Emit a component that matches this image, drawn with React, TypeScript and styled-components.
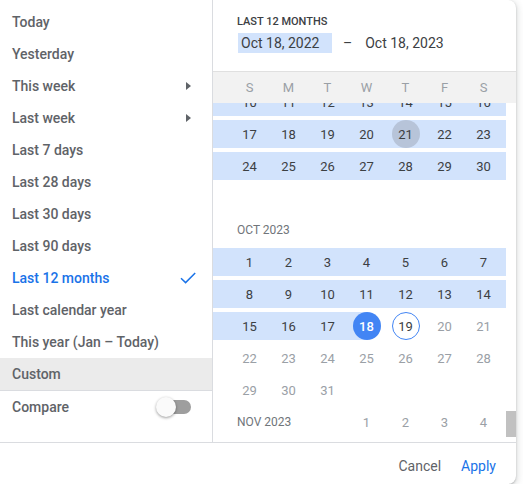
import React, { useCallback, useLayoutEffect, useRef, useState } from "react";
import styled, { createGlobalStyle } from "styled-components";

const GlobalStyle = createGlobalStyle`
  html, body { margin: 0; padding: 0; background: #fff; }
  body { font-family: Roboto, "Noto Sans", Arial, sans-serif; }
  *, *::before, *::after { box-sizing: border-box; }
`;

const ROW_H = 32;
const MONTH_ROWS = 6;
const RANGE_START = 20221018;
const RANGE_END = 20231018;
const TODAY = 20231019;
const HOVERED = 20230921;
const LAST_RENDERED = 20231118;
const FIRST_MONTH = { y: 2022, m: 0 };
const LAST_MONTH = { y: 2023, m: 10 };
const SCROLL_MONTH = { y: 2023, m: 8 };
const SCROLL_INTO = 81;

const MONTHS = ["JAN", "FEB", "MAR", "APR", "MAY", "JUN", "JUL", "AUG", "SEP", "OCT", "NOV", "DEC"];

type Cell = { day: number; key: number };
type Week = { label?: string; cells: (Cell | null)[] };
type Month = { id: string; weeks: Week[] };

function buildMonth(y: number, m: number, pad: boolean): Month {
  const first = new Date(y, m, 1).getDay();
  const dim = new Date(y, m + 1, 0).getDate();
  const label = `${MONTHS[m]} ${y}`;
  const weeks: Week[] = [];
  const separate = first < 3;
  if (separate) weeks.push({ label, cells: Array(7).fill(null) });
  let row: (Cell | null)[] = Array(7).fill(null);
  for (let d = 1; d <= dim; d++) {
    const key = y * 10000 + (m + 1) * 100 + d;
    if (key > LAST_RENDERED) break;
    const dow = (first + d - 1) % 7;
    row[dow] = { day: d, key };
    if (dow === 6 || d === dim || key === LAST_RENDERED) {
      weeks.push({ label: !separate && weeks.length === 0 ? label : undefined, cells: row });
      row = Array(7).fill(null);
    }
  }
  if (pad) while (weeks.length < MONTH_ROWS) weeks.push({ cells: Array(7).fill(null) });
  return { id: label, weeks };
}

function buildMonths(): Month[] {
  const list: Month[] = [];
  let { y, m } = FIRST_MONTH;
  while (y < LAST_MONTH.y || (y === LAST_MONTH.y && m <= LAST_MONTH.m)) {
    const isLast = y === LAST_MONTH.y && m === LAST_MONTH.m;
    list.push(buildMonth(y, m, !isLast));
    m++;
    if (m > 11) { m = 0; y++; }
  }
  return list;
}

const inRange = (k: number) => k >= RANGE_START && k <= RANGE_END;

/* ---------- layout ---------- */

const Card = styled.div`
  width: 516px;
  height: 484px;
  display: grid;
  grid-template-columns: 213px 1fr;
  grid-template-rows: 442px 1fr;
  background: #fff;
  border-radius: 0 8px 8px 0;
  box-shadow: 0 1px 2px rgba(60, 64, 67, 0.3), 0 2px 6px 2px rgba(60, 64, 67, 0.15);
  overflow: hidden;
`;

/* ---------- presets ---------- */

const Presets = styled.div`
  border-right: 1px solid #dadce0;
  display: flex;
  flex-direction: column;
  padding-top: 6px;
`;

const Preset = styled.div<{ $active?: boolean; $custom?: boolean }>`
  height: ${(p) => (p.$custom ? "33px" : "32px")};
  flex: none;
  display: flex;
  align-items: center;
  justify-content: space-between;
  padding: 0 16px 0 12px;
  font-size: 14px;
  font-weight: 500;
  color: ${(p) => (p.$active ? "#1a73e8" : "#5f6368")};
  background: ${(p) => (p.$custom ? "#ebebeb" : "transparent")};
  border-bottom: ${(p) => (p.$custom ? "1px solid #dadce0" : "none")};
`;

const PresetIcon = styled.span`
  width: 16px;
  display: flex;
  align-items: center;
  justify-content: center;
`;

const Toggle = styled.span`
  position: relative;
  width: 34px;
  height: 14px;
  margin-right: 5px;
  border-radius: 7px;
  background: #9e9e9e;
`;

const ToggleThumb = styled.span`
  position: absolute;
  left: -1px;
  top: -3px;
  width: 20px;
  height: 20px;
  border-radius: 50%;
  background: #fafafa;
  box-shadow: 0 1px 3px rgba(0, 0, 0, 0.4);
`;

/* ---------- calendar ---------- */

const CalendarPanel = styled.div`
  display: flex;
  flex-direction: column;
  min-height: 0;
`;

const RangeHeader = styled.div`
  height: 72px;
  flex: none;
  padding: 14px 24px 0 24px;
  border-bottom: 1px solid #e0e0e0;
`;

const RangeTitle = styled.div`
  font-size: 11px;
  line-height: 16px;
  font-weight: 500;
  color: #3c4043;
  margin-bottom: 3px;
`;

const RangeDates = styled.div`
  display: flex;
  align-items: center;
  height: 20px;
  font-size: 14px;
  color: #3c4043;
`;

const DateChip = styled.span<{ $focused?: boolean }>`
  display: flex;
  align-items: center;
  height: 20px;
  padding: 0 3px;
  margin-left: ${(p) => (p.$focused ? "1px" : "0")};
  width: ${(p) => (p.$focused ? "94px" : "auto")};
  background: ${(p) => (p.$focused ? "#d2e3fc" : "transparent")};
`;

const Dash = styled.span`
  margin: 0 10px 0 11px;
`;

const Weekdays = styled.div`
  height: 31px;
  flex: none;
  display: grid;
  grid-template-columns: 17px repeat(7, 39px) 1fr;
  align-items: center;
  background: #f2f2f2;
  font-size: 13px;
  color: #9aa0a6;
`;

const Weekday = styled.span<{ $col: number }>`
  grid-column: ${(p) => p.$col + 2};
  text-align: center;
`;

const ScrollArea = styled.div`
  flex: 1;
  min-height: 0;
  display: flex;
`;

const Viewport = styled.div`
  width: 293px;
  flex: none;
  overflow-y: scroll;
  scrollbar-width: none;
  &::-webkit-scrollbar { display: none; }
`;

const ScrollTrack = styled.div`
  position: relative;
  flex: 1;
  background: #fff;
`;

const ScrollThumb = styled.div`
  position: absolute;
  left: 0;
  right: 0;
  background: #c1c1c1;
`;

const WeekRow = styled.div`
  height: ${ROW_H}px;
  padding: 2px 0;
  display: grid;
  grid-template-columns: 17px repeat(7, 39px) 1fr;
  grid-template-rows: 28px;
`;

const Pad = styled.div<{ $col: number; $on: boolean }>`
  grid-row: 1;
  grid-column: ${(p) => p.$col};
  background: ${(p) => (p.$on ? "#d2e3fc" : "transparent")};
`;

const MonthLabel = styled.div`
  grid-row: 1;
  grid-column: 2 / span 4;
  display: flex;
  align-items: center;
  padding-left: 7px;
  font-size: 12px;
  color: #70757a;
`;

type Fill = "none" | "full" | "left" | "right";
const fillBg = (f: Fill) => {
  const c = "#d2e3fc";
  if (f === "full") return c;
  if (f === "left") return `linear-gradient(to right, ${c} 50%, transparent 50%)`;
  if (f === "right") return `linear-gradient(to right, transparent 50%, ${c} 50%)`;
  return "transparent";
};

const DayCell = styled.div<{ $col: number; $fill: Fill }>`
  grid-row: 1;
  grid-column: ${(p) => p.$col + 2};
  display: flex;
  align-items: center;
  justify-content: center;
  background: ${(p) => fillBg(p.$fill)};
`;

type Kind = "plain" | "muted" | "edge" | "today" | "hover";

const DayNum = styled.span<{ $kind: Kind }>`
  width: 28px;
  height: 28px;
  border-radius: 50%;
  display: flex;
  align-items: center;
  justify-content: center;
  font-size: 13px;
  font-weight: ${(p) => (p.$kind === "edge" ? 500 : 400)};
  color: ${(p) => (p.$kind === "edge" ? "#fff" : p.$kind === "muted" ? "#9aa0a6" : "#3c4043")};
  background: ${(p) => (p.$kind === "edge" ? "#4285f4" : p.$kind === "hover" ? "#b7c4d9" : "transparent")};
  border: ${(p) => (p.$kind === "today" ? "1px solid #4285f4" : "none")};
`;

/* ---------- footer ---------- */

const Footer = styled.div`
  grid-column: 1 / -1;
  border-top: 1px solid #dadce0;
  display: flex;
  justify-content: flex-end;
  align-items: center;
  gap: 4px;
  padding: 4px 12px 0 0;
`;

const TextButton = styled.button<{ $primary?: boolean }>`
  border: none;
  background: none;
  padding: 0 8px;
  height: 32px;
  font-family: inherit;
  font-size: 14px;
  font-weight: 400;
  color: ${(p) => (p.$primary ? "#1a73e8" : "#5f6368")};
  cursor: pointer;
`;

/* ---------- icons ---------- */

const Arrow = () => (
  <svg width="5" height="8" viewBox="0 0 5 8">
    <polygon points="0,0 5,4 0,8" fill="#5f6368" />
  </svg>
);

const Check = () => (
  <svg width="16" height="12" viewBox="0 0 16 12">
    <path d="M1 6.2 L5.6 10.6 L15.2 1" fill="none" stroke="#1a73e8" strokeWidth="1.5" />
  </svg>
);

/* ---------- components ---------- */

const PRESETS: { label: string; arrow?: boolean; active?: boolean }[] = [
  { label: "Today" },
  { label: "Yesterday" },
  { label: "This week", arrow: true },
  { label: "Last week", arrow: true },
  { label: "Last 7 days" },
  { label: "Last 28 days" },
  { label: "Last 30 days" },
  { label: "Last 90 days" },
  { label: "Last 12 months", active: true },
  { label: "Last calendar year" },
  { label: "This year (Jan – Today)" },
];

function cellFill(k: number): Fill {
  if (!inRange(k)) return "none";
  if (k === RANGE_START && k === RANGE_END) return "none";
  if (k === RANGE_START) return "right";
  if (k === RANGE_END) return "left";
  return "full";
}

function cellKind(k: number): Kind {
  if (k === RANGE_START || k === RANGE_END) return "edge";
  if (k === TODAY) return "today";
  if (k === HOVERED) return "hover";
  if (k > TODAY) return "muted";
  return "plain";
}

const WeekView = ({ week }: { week: Week }) => {
  const first = week.cells[0];
  const last = week.cells[6];
  const leftOn = !!first && inRange(first.key) && first.key !== RANGE_START;
  const rightOn = !!last && inRange(last.key) && last.key !== RANGE_END;
  return (
    <WeekRow>
      <Pad $col={1} $on={leftOn} />
      {week.label && <MonthLabel>{week.label}</MonthLabel>}
      {week.cells.map((c, i) =>
        c ? (
          <DayCell key={i} $col={i} $fill={cellFill(c.key)}>
            <DayNum $kind={cellKind(c.key)}>{c.day}</DayNum>
          </DayCell>
        ) : null
      )}
      <Pad $col={9} $on={rightOn} />
    </WeekRow>
  );
};

export default function App() {
  const months = buildMonths();
  const viewRef = useRef<HTMLDivElement>(null);
  const [thumb, setThumb] = useState({ top: 0, height: 0 });

  const syncThumb = useCallback(() => {
    const el = viewRef.current;
    if (!el) return;
    const track = el.clientHeight;
    const height = Math.max(20, (track * el.clientHeight) / el.scrollHeight);
    const max = el.scrollHeight - el.clientHeight;
    const top = max > 0 ? (el.scrollTop / max) * (track - height) : 0;
    setThumb({ top, height });
  }, []);

  useLayoutEffect(() => {
    const idx = (SCROLL_MONTH.y - FIRST_MONTH.y) * 12 + (SCROLL_MONTH.m - FIRST_MONTH.m);
    if (viewRef.current) viewRef.current.scrollTop = idx * MONTH_ROWS * ROW_H + SCROLL_INTO;
    syncThumb();
  }, [syncThumb]);

  return (
    <>
      <GlobalStyle />
      <Card>
        <Presets>
          {PRESETS.map((p) => (
            <Preset key={p.label} $active={p.active}>
              <span>{p.label}</span>
              <PresetIcon>{p.arrow ? <Arrow /> : p.active ? <Check /> : null}</PresetIcon>
            </Preset>
          ))}
          <Preset $custom>
            <span>Custom</span>
          </Preset>
          <Preset>
            <span>Compare</span>
            <Toggle>
              <ToggleThumb />
            </Toggle>
          </Preset>
        </Presets>

        <CalendarPanel>
          <RangeHeader>
            <RangeTitle>LAST 12 MONTHS</RangeTitle>
            <RangeDates>
              <DateChip $focused>Oct 18, 2022</DateChip>
              <Dash>–</Dash>
              <DateChip>Oct 18, 2023</DateChip>
            </RangeDates>
          </RangeHeader>
          <Weekdays>
            {["S", "M", "T", "W", "T", "F", "S"].map((d, i) => (
              <Weekday key={i} $col={i}>{d}</Weekday>
            ))}
          </Weekdays>
          <ScrollArea>
            <Viewport ref={viewRef} onScroll={syncThumb}>
              {months.map((m) => (
                <div key={m.id}>
                  {m.weeks.map((w, i) => (
                    <WeekView key={i} week={w} />
                  ))}
                </div>
              ))}
            </Viewport>
            <ScrollTrack>
              <ScrollThumb style={{ top: thumb.top, height: thumb.height }} />
            </ScrollTrack>
          </ScrollArea>
        </CalendarPanel>

        <Footer>
          <TextButton>Cancel</TextButton>
          <TextButton $primary>Apply</TextButton>
        </Footer>
      </Card>
    </>
  );
}
